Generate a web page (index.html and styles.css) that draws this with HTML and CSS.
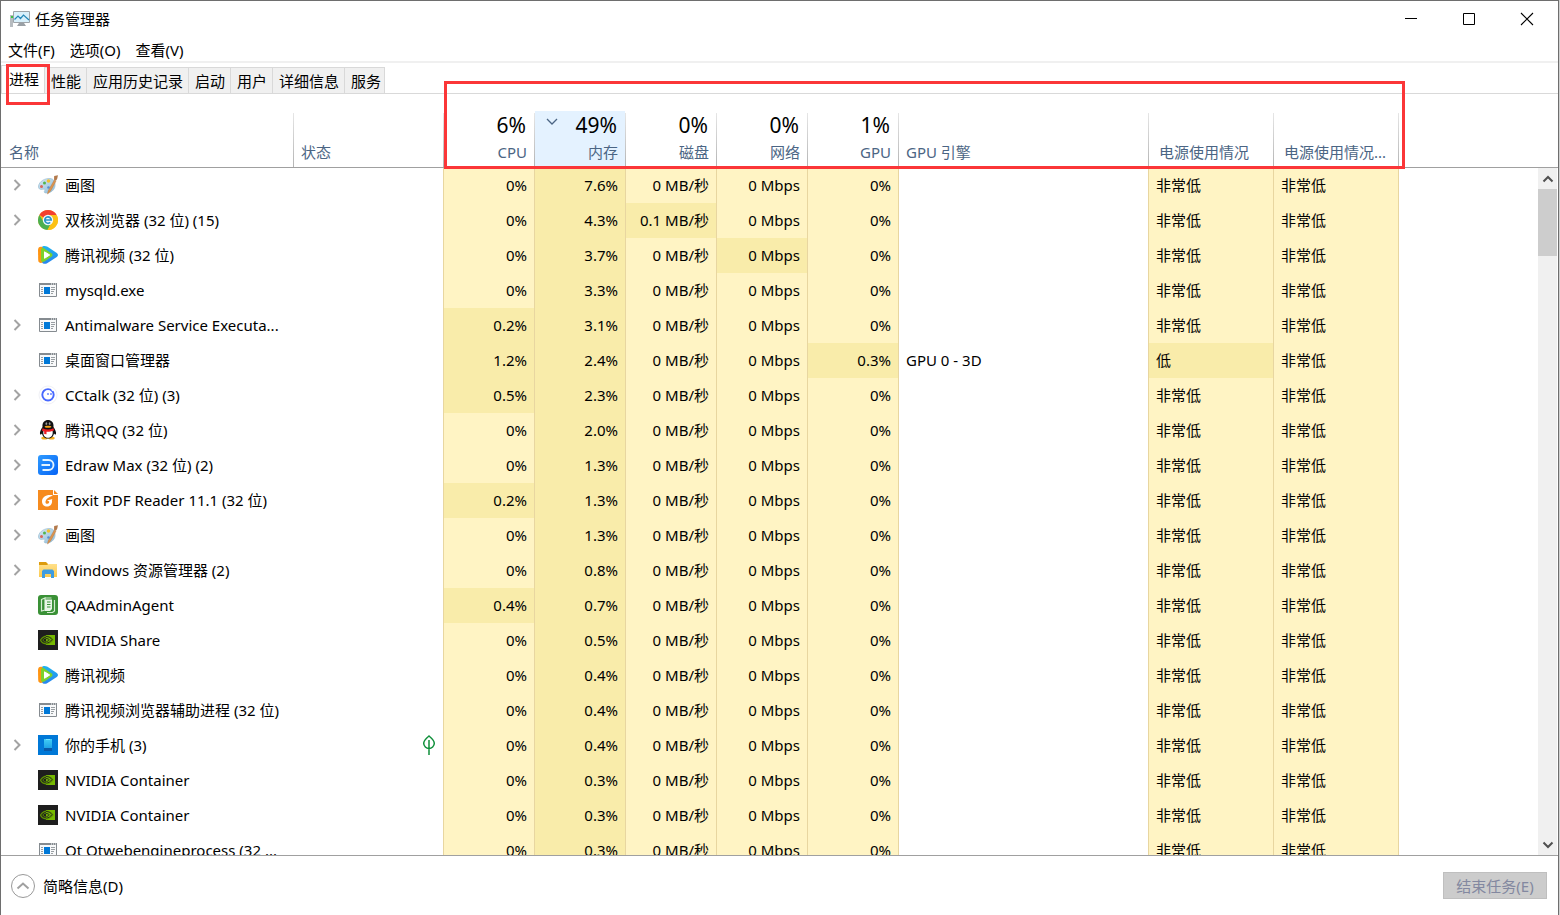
FILE: index.html
```html
<!DOCTYPE html>
<html lang="zh-CN">
<head>
<meta charset="utf-8">
<title>任务管理器</title>
<link rel="stylesheet" href="styles.css">
</head>
<body>
<svg class="sprite" aria-hidden="true">
  <defs>
    <linearGradient id="palette" x1="0" y1="0" x2="1" y2="1"><stop offset="0" stop-color="#d6e9f4"/><stop offset="1" stop-color="#8dbbd9"/></linearGradient>
    <linearGradient id="play-blue" x1="0" y1="0" x2="0" y2="1"><stop offset="0" stop-color="#20b4f0"/><stop offset="1" stop-color="#2785ee"/></linearGradient>
    <linearGradient id="edraw-bg" x1="0" y1="0" x2="1" y2="1"><stop offset="0" stop-color="#2f9bff"/><stop offset="1" stop-color="#0563f5"/></linearGradient>
    <linearGradient id="folder-bg" x1="0" y1="0" x2="0" y2="1"><stop offset="0" stop-color="#ffe08a"/><stop offset="1" stop-color="#fbc94e"/></linearGradient>
    <linearGradient id="phone-bg" x1="0" y1="0" x2="0" y2="1"><stop offset="0" stop-color="#41cdf5"/><stop offset="1" stop-color="#1fa4e6"/></linearGradient>
  </defs>
  <symbol id="paint" viewBox="0 0 20 20">
    <path d="M.5 11C1.500 6 7 3.200 12 3.500c4 .3 5.500 3.500 5 7.500-.6 4-4 7-8.500 7-2 0-2.800-.8-1.800-2.300.8-1.300-.2-1.700-1.800-1.500C2 14.800.1 14 .5 11z" fill="url(#palette)" stroke="#9cbed3" stroke-width=".7"/>
    <circle cx="3.500" cy="11.500" r="1.500" fill="#d9675a"/><circle cx="6.500" cy="8" r="1.500" fill="#55b44a"/><circle cx="10.500" cy="6" r="1.800" fill="#f2c02f"/><circle cx="10.500" cy="12.500" r="1.300" fill="#5b8fd0"/>
    <path d="M9.500 19c.3-2 .8-4 2-5.500l4.800-8.500 1.700 1-4.600 8.700c-1 1.700-2.200 3-3.900 4.300z" fill="#dc9550" stroke="#b06f38" stroke-width=".4"/>
    <path d="M16 4.800 16.200 1 20 .2l-.8 3.600L18 5.800z" fill="#b37a4c"/>
  </symbol>
  <symbol id="chrome" viewBox="0 0 20 20">
    <circle cx="10" cy="10" r="10" fill="#fbc116"/>
    <path d="M10 10 1.340 5A10 10 0 0 1 18.660 5z" fill="#f4402f"/>
    <path d="M1.340 5A10 10 0 0 0 9.500 20l4-7.800L10 10 5.800 12z" fill="#4caf50"/>
    <path d="M10 5h8.660A10 10 0 0 1 9.500 20l4.400-7.800z" fill="#fbc116"/>
    <circle cx="10" cy="10" r="5.200" fill="#f2f9fd"/>
    <path d="M7 10h6.200a3.200 3.200 0 1 0-1 2.400" fill="none" stroke="#2b94c8" stroke-width="1.700"/>
  </symbol>
  <symbol id="video" viewBox="0 0 20 20">
    <path d="M4 2C5 .5 7.500.8 9.500 1.700l9.300 6.200c1.600 1.200 1.600 2.800 0 4L9.500 18c-2 1.200-4.500 1.200-5.500-.5z" fill="url(#play-blue)"/>
    <path d="M0 5C0 2 2 1 4.500 2v15.500C2.500 18.500.3 17.500.2 15z" fill="#ff9412"/>
    <path d="M3 5c0-2 1.700-2.500 3.400-1.500l7 4.700c1.500 1.200 1.500 2.400 0 3.600l-7 4.700C4.700 17.500 3 17 3 15z" fill="#7bd12d"/>
    <path d="M6.500 6.800 11.700 10 6.500 13.300z" fill="#fff" stroke="#fff" stroke-linejoin="round"/>
  </symbol>
  <symbol id="exe" viewBox="0 0 20 20">
    <path d="M1.500 3.500h17v13h-17z" fill="#f8f9fa" stroke="#858b90"/>
    <path d="M1 3h18v2H1z" fill="#858b90"/><path d="M13 3.500h1v1h-1zm2 0h1v1h-1zm2 0h1v1h-1z" fill="#fff"/>
    <path d="M6 7h6v7H6z" fill="#0078d7"/>
    <path d="M3 7.500h2M3 9.500h2M3 11.500h2M3 13.500h2M13 7.500h4M13 9.500h4M13 11.500h3M13 13.500h2" stroke="#9a9fa3"/>
  </symbol>
  <symbol id="cctalk" viewBox="0 0 20 20">
    <circle cx="10" cy="10" r="9" fill="#fff" stroke="#f0f1f6"/>
    <circle cx="10" cy="9.800" r="5.700" fill="#fff" stroke="#4768ff" stroke-width="1.900"/>
    <path d="m13.700 4.200 1.500 1.500" stroke="#fff" stroke-width="1.500"/>
    <path d="M10 8v2M13 8v2" stroke="#4768ff" stroke-width="1.200"/>
  </symbol>
  <symbol id="qq" viewBox="0 0 20 20">
    <ellipse cx="6.500" cy="18" rx="3.200" ry="1.600" fill="#f5b01c"/><ellipse cx="13.500" cy="18" rx="3.200" ry="1.600" fill="#f5b01c"/>
    <path d="M4.500 7C4 2 7 0 10 0s6 2 5.500 7c1.500 2.500 3 5 2.500 7-.3 1-1.500.3-2-.5-.5 3-3 5-6 5s-5.500-2-6-5c-.5.800-1.700 1.500-2 .5-.5-2 1-4.500 2.500-7z" fill="#111"/>
    <path d="M5.500 10.500h9c1 5-1.500 7.300-4.500 7.300s-5.500-2.300-4.500-7.300z" fill="#fff"/>
    <ellipse cx="8.400" cy="3.800" rx=".8" ry="1.400" fill="#ddd"/><ellipse cx="11.600" cy="3.800" rx=".8" ry="1.400" fill="#ddd"/><circle cx="8.600" cy="4" r=".5"/><circle cx="11.400" cy="4" r=".5"/>
    <ellipse cx="10" cy="6.800" rx="3.300" ry="1" fill="#f5a51c"/>
    <path d="M4.500 8.300c3.500 1.700 7.500 1.700 11 0l.5 2.200c-2.500 1-5.500 1.500-7.500 1.300v2.500l-2.300-.2v-2.700L4 10.700z" fill="#ed1c24"/>
  </symbol>
  <symbol id="edraw" viewBox="0 0 20 20">
    <rect width="20" height="20" rx="3" fill="url(#edraw-bg)"/>
    <path d="M4.500 5h6a5 5 0 0 1 0 10h-6M3.500 10H12" fill="none" stroke="#e4f4ff" stroke-width="1.900"/>
  </symbol>
  <symbol id="foxit" viewBox="0 0 20 20">
    <path d="M0 0h15v5h5v15H0z" fill="#f68b1f"/><path d="M16 0v4h4z" fill="#f68b1f"/>
    <path d="M15 5.500C9 4 4 7 4 11.500c0 3 2.300 5 5 5 3.500 0 5.500-2.500 5-6.500l-2.700.5c.2 2-.6 3.300-2 3.300-1.300 0-2-.9-1.800-2.300C7.800 9 10.500 7 15 5.500z" fill="#fff"/>
    <path d="M9 10.500 14.500 9l-2 3z" fill="#fff"/>
  </symbol>
  <symbol id="folder" viewBox="0 0 20 20">
    <path d="M1 2h7l2 2v3H1z" fill="#dc9b0c"/><path d="M1 5h8l1.500-1H19v13H1z" fill="url(#folder-bg)"/>
    <path d="M4 18v-7l1.500-1.500h9L16 11v7h-3v-4H7v4z" fill="#3f9ce0"/>
  </symbol>
  <symbol id="agent" viewBox="0 0 20 20">
    <rect width="20" height="20" rx="3" fill="#3a9136"/>
    <path d="M3.500 4.500 7 3v12l-3.500 1zM7 3h6.500M16.500 5v11l-2 1.500H9" fill="none" stroke="#d4ecd1" stroke-width="1.200"/>
    <path d="M7 4.500h7V14l-2 2H7z" fill="#e9f6e7"/><path d="M9 7h3.500M9 9.500h3.500M9 12h3.500" stroke="#3a9136" stroke-width="1.100"/>
  </symbol>
  <symbol id="nvidia" viewBox="0 0 20 20">
    <path d="M0 0h20v20H0z" fill="#1e1e1e"/><path d="M8 5h9v10H8z" fill="#76b900"/>
    <path d="M2.500 10C5 6.500 8 5.800 10.500 6.500 13 7.300 14.500 9 15 10c-2 2.700-4 4-7 3.900C5 13.500 3.300 12 2.500 10z" fill="none" stroke="#5d9000" stroke-width="1.200"/>
    <path d="M8 6.500c3 0 5 1.500 6 3-1.500 2.300-3.500 3.500-6 3.500M8 8.500c1.600 0 2.700.5 3.300 1.200C10.500 11 9.500 11.500 8 11.500" fill="none" stroke="#1e1e1e" stroke-width=".9"/>
    <path d="M8 8C6 8.300 5 9.500 5 10.200 5.500 11.500 7 12.200 9 12" fill="none" stroke="#5d9000"/>
  </symbol>
  <symbol id="phone" viewBox="0 0 20 20">
    <path d="M0 0h20v20H0z" fill="#0078d7"/><path d="M6 4h8v9H6z" fill="url(#phone-bg)"/><path d="M6 13h8v3H6z" fill="#0a5aa8"/><path d="M8 4h4v1H8z" fill="#78e3ff"/>
  </symbol>
  <symbol id="chevron" viewBox="0 0 9 12"><path d="m1.500 1 5 5-5 5" fill="none" stroke="#a3a3a3" stroke-width="2"/></symbol>
  <symbol id="leaf" viewBox="0 0 14 20"><path d="M7 1c3 2.500 5.300 4.500 5.300 7.300S9.700 13.500 7 13.500 1.700 11.100 1.700 8.300 4 3.500 7 1zM7 5v15" fill="none" stroke="#0f8f3a" stroke-width="1.500"/></symbol>
</svg>

<main class="window">
  <header class="titlebar">
    <svg class="app-icon" viewBox="0 0 20 18" aria-hidden="true">
      <path d="M0 5h3v12H0z" fill="#b7bcc0"/><path d="M1 6h2v2H1z" fill="#3cc341"/>
      <path d="M3.500 1.500h16v11h-16z" fill="#d8f0fb" stroke="#9da4a9"/>
      <path d="m4.500 9.500 3.500-3.500 2.500 2.500 3-3.500 5.500 5" fill="none" stroke="#2387b7" stroke-width="1.200"/>
      <path d="M9 13h5l2 3H7z" fill="#9aa0a5"/>
    </svg>
    <h1 class="title">任务管理器</h1>
    <div class="window-controls">
      <button type="button" aria-label="最小化"><svg viewBox="0 0 14 14"><path d="M1 6.500h12" stroke="#000"/></svg></button>
      <button type="button" aria-label="最大化"><svg viewBox="0 0 14 14"><path d="M1.500 1.500h11v11h-11z" fill="none" stroke="#000"/></svg></button>
      <button type="button" aria-label="关闭"><svg viewBox="0 0 14 14"><path d="m1 1 12 12M13 1 1 13" stroke="#000" stroke-width="1.100"/></svg></button>
    </div>
  </header>
  <nav class="menubar">
    <button type="button">文件(F)</button>
    <button type="button">选项(O)</button>
    <button type="button">查看(V)</button>
  </nav>
  <div class="tabs" role="tablist">
    <button type="button" role="tab" class="tab selected" aria-selected="true">进程</button>
    <button type="button" role="tab" class="tab">性能</button>
    <button type="button" role="tab" class="tab">应用历史记录</button>
    <button type="button" role="tab" class="tab">启动</button>
    <button type="button" role="tab" class="tab">用户</button>
    <button type="button" role="tab" class="tab">详细信息</button>
    <button type="button" role="tab" class="tab">服务</button>
  </div>
  <section class="panel">
    <div class="list">
      <table class="processes">
        <colgroup>
          <col class="w-name"><col class="w-status"><col class="w-usage"><col class="w-usage"><col class="w-usage"><col class="w-usage"><col class="w-usage"><col class="w-engine"><col class="w-power"><col class="w-power"><col>
        </colgroup>
        <thead>
          <tr>
            <th class="first">名称</th>
            <th>状态</th>
            <th class="num"><span class="total">6%</span>CPU</th>
            <th class="num sorted"><div class="sort-fill"><svg class="sort-arrow" viewBox="0 0 12 8"><path d="m1 1 5 5 5-5" fill="none" stroke="#4b6584" stroke-width="1.300"/></svg><span class="total">49%</span>内存</div></th>
            <th class="num"><span class="total">0%</span>磁盘</th>
            <th class="num"><span class="total">0%</span>网络</th>
            <th class="num"><span class="total">1%</span>GPU</th>
            <th>GPU 引擎</th>
            <th class="power">电源使用情况</th>
            <th class="power">电源使用情况...</th>
            <th></th>
          </tr>
        </thead>
        <tbody id="rows"></tbody>
      </table>
    </div>
    <div class="scroll">
      <div class="scroll-head"></div>
      <div class="scrollbar">
        <button type="button" aria-label="向上滚动"><svg viewBox="0 0 12 8"><path d="m1.500 6.500 4.500-4.500 4.500 4.500" fill="none" stroke="#505050" stroke-width="2"/></svg></button>
        <div class="thumb"></div>
        <button type="button" class="down" aria-label="向下滚动"><svg viewBox="0 0 12 8"><path d="m1.500 1.500 4.500 4.500 4.500-4.500" fill="none" stroke="#505050" stroke-width="2"/></svg></button>
      </div>
    </div>
  </section>
  <footer class="footer">
    <button type="button" class="fewer">
      <svg viewBox="0 0 24 24"><circle cx="12" cy="12" r="11.500" fill="#fff" stroke="#999"/><path d="m6.500 14.500 5.500-5 5.500 5" fill="none" stroke="#a0a0a0" stroke-width="2"/></svg>
      简略信息(D)
    </button>
    <button type="button" class="end-task" disabled>结束任务(E)</button>
  </footer>
  <div class="mark mark-tab"></div>
  <div class="mark mark-columns"></div>
</main>
<script src="app.js"></script>
</body>
</html>
```

FILE: styles.css
```css
* { box-sizing: border-box; }

body {
  margin: 0;
  padding-right: 1px;
  background: #d0d0d0;
  color: #000;
  font: 15px/20px "Noto Sans", "Noto Sans CJK SC", sans-serif;
}

button {
  margin: 0;
  padding: 0;
  border: 0;
  background: none;
  color: inherit;
  font: inherit;
}

svg { display: block; }

.sprite {
  position: absolute;
  width: 0;
  height: 0;
}

.window {
  position: relative;
  display: flex;
  flex-direction: column;
  height: 100vh;
  border: 1px solid #6e6e6e;
  border-bottom: 0;
  background: #fff;
}

.titlebar {
  display: flex;
  align-items: center;
  height: 36px;
  padding: 0 2px 0 9px;
}

.app-icon { width: 20px; height: 18px; }

.title {
  flex: 1;
  margin: 0 0 0 5px;
  font-size: 15px;
  font-weight: 400;
}

.window-controls { display: flex; }

.window-controls button {
  display: grid;
  place-items: center;
  width: 58px;
  height: 36px;
}

.window-controls svg { width: 14px; height: 14px; }

.menubar {
  display: flex;
  gap: 15px;
  height: 26px;
  padding: 3px 7px 0;
  border-bottom: 2px solid #f0f0f0;
}

.menubar button { height: 20px; }

.tabs {
  display: flex;
  align-items: flex-end;
  height: 31px;
  border-bottom: 1px solid #d9d9d9;
}

.tab {
  height: 26px;
  padding: 0 5px 0 6px;
  border: 1px solid #d9d9d9;
  border-width: 1px 1px 0 0;
  background: #f0f0f0;
}

.tab:last-child { padding-right: 3px; }

.tab.selected {
  height: 28px;
  padding: 0 5px 2px 7px;
  border-left-width: 1px;
  background: #fff;
}

.panel {
  display: flex;
  flex: 1;
  min-height: 0;
}

.list {
  flex: 1;
  min-width: 0;
  overflow: hidden;
}

.processes {
  width: 100%;
  border-spacing: 0;
  table-layout: fixed;
}

.w-name { width: 292px; }
.w-status { width: 150px; }
.w-usage { width: 91px; }
.w-engine { width: 250px; }
.w-power { width: 125px; }

th {
  height: 74px;
  padding: 0 8px 5px;
  border-bottom: 1px solid #a0a0a0;
  background: linear-gradient(#e6e6e6, #b4b4b4) no-repeat left bottom / 1px 54px;
  color: #4b6584;
  font-weight: 400;
  text-align: left;
  vertical-align: bottom;
  white-space: nowrap;
}

th.first { background: none; }
th.num { padding-right: 7px; text-align: right; }
th.power { padding: 0 0 5px 11px; }

th.sorted { padding: 0 0 0 1px; }

.sort-fill {
  position: relative;
  padding: 0 7px 5px 0;
  background: #e4f2ff;
}

.sort-arrow {
  position: absolute;
  top: 7px;
  left: 11px;
  width: 12px;
  height: 8px;
}

.total {
  display: block;
  margin-bottom: 3px;
  padding-right: 1px;
  color: #000;
  font-size: 21px;
  line-height: 28px;
}

td {
  height: 35px;
  padding: 0 7px 2px;
  overflow: hidden;
  white-space: nowrap;
}

td.heat {
  border-left: 1px solid #e8d6a0;
  background: #fff4c4;
}

td.num { text-align: right; }
td.heat.warm { background: #f9ecaa; }
td.after { border-left: 1px solid #e8d6a0; }
td.name { padding: 0 0 2px 12px; }

.process {
  display: grid;
  grid-template-columns: 25px 27px 1fr;
  align-items: center;
}

.expand { width: 9px; height: 12px; }
.expand svg { width: 9px; height: 12px; }

.process-icon { width: 20px; height: 20px; }

.leaf {
  width: 14px;
  height: 20px;
  margin-left: auto;
}

.scroll {
  display: flex;
  flex-direction: column;
  width: 20px;
}

.scroll-head {
  height: 74px;
  border-bottom: 1px solid #a0a0a0;
}

.scrollbar {
  display: flex;
  flex: 1;
  flex-direction: column;
  margin-right: 1px;
  background: #f0f0f0;
}

.scrollbar button {
  display: grid;
  place-items: center;
  height: 21px;
}

.scrollbar svg { width: 12px; height: 8px; }

.thumb {
  height: 67px;
  background: #cdcdcd;
}

.down { margin-top: auto; }

.footer {
  display: flex;
  align-items: center;
  justify-content: space-between;
  height: 60px;
  padding: 0 11px 0 10px;
  border-top: 1px solid #a0a0a0;
}

.fewer {
  display: flex;
  align-items: center;
  gap: 8px;
}

.fewer svg { width: 24px; height: 24px; }

.end-task {
  width: 104px;
  height: 27px;
  border: 1px solid #bfbfbf;
  background: #ccc;
  color: #8388a0;
}

.mark {
  position: absolute;
  border: 3px solid #fb3638;
  pointer-events: none;
}

.mark-tab {
  top: 63px;
  left: 5px;
  width: 44px;
  height: 41px;
}

.mark-columns {
  top: 80px;
  left: 443px;
  width: 961px;
  height: 88px;
}
```

FILE: app.js
```js
// name, icon, expandable, cpu, memory, then optional overrides
const processes = [
  ["画图", "paint", true, "0%", "7.6%"],
  ["双核浏览器 (32 位) (15)", "chrome", true, "0%", "4.3%", { disk: "0.1 MB/秒" }],
  ["腾讯视频 (32 位)", "video", false, "0%", "3.7%", { netWarm: true }],
  ["mysqld.exe", "exe", false, "0%", "3.3%"],
  ["Antimalware Service Executa...", "exe", true, "0.2%", "3.1%"],
  ["桌面窗口管理器", "exe", false, "1.2%", "2.4%", { gpu: "0.3%", engine: "GPU 0 - 3D", power: "低" }],
  ["CCtalk (32 位) (3)", "cctalk", true, "0.5%", "2.3%"],
  ["腾讯QQ (32 位)", "qq", true, "0%", "2.0%"],
  ["Edraw Max (32 位) (2)", "edraw", true, "0%", "1.3%"],
  ["Foxit PDF Reader 11.1 (32 位)", "foxit", true, "0.2%", "1.3%"],
  ["画图", "paint", true, "0%", "1.3%"],
  ["Windows 资源管理器 (2)", "folder", true, "0%", "0.8%"],
  ["QAAdminAgent", "agent", false, "0.4%", "0.7%"],
  ["NVIDIA Share", "nvidia", false, "0%", "0.5%"],
  ["腾讯视频", "video", false, "0%", "0.4%"],
  ["腾讯视频浏览器辅助进程 (32 位)", "exe", false, "0%", "0.4%"],
  ["你的手机 (3)", "phone", true, "0%", "0.4%", { leaf: true }],
  ["NVIDIA Container", "nvidia", false, "0%", "0.3%"],
  ["NVIDIA Container", "nvidia", false, "0%", "0.3%"],
  ["Qt Qtwebengineprocess (32 ...", "exe", false, "0%", "0.3%"]
];

const icon = (id, cls) => `<svg class="${cls}" aria-hidden="true"><use href="#${id}"/></svg>`;
const heat = (text, warm, num = true) =>
  `<td class="heat${num ? " num" : ""}${warm ? " warm" : ""}">${text}</td>`;

document.getElementById("rows").innerHTML = processes.map(([name, image, expandable, cpu, memory, extra = {}]) => `
  <tr>
    <td class="name"><div class="process">
      ${expandable ? `<button type="button" class="expand" aria-label="展开">${icon("chevron", "")}</button>` : "<span></span>"}
      ${icon(image, "process-icon")}<span>${name}</span>
    </div></td>
    <td>${extra.leaf ? icon("leaf", "leaf") : ""}</td>
    ${heat(cpu, cpu !== "0%")}
    ${heat(memory, true)}
    ${heat(extra.disk || "0 MB/秒", extra.disk)}
    ${heat("0 Mbps", extra.netWarm)}
    ${heat(extra.gpu || "0%", extra.gpu)}
    <td class="after">${extra.engine || ""}</td>
    ${heat(extra.power || "非常低", extra.power, false)}
    ${heat("非常低", false, false)}
    <td class="after"></td>
  </tr>`).join("");
```
